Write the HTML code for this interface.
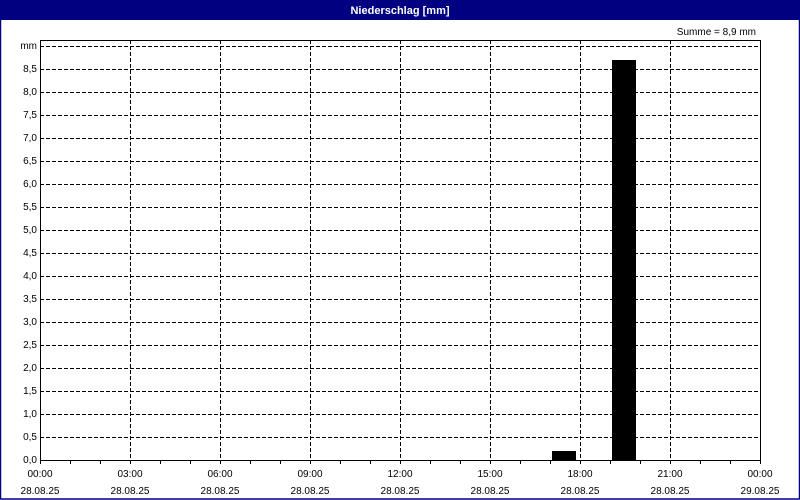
<!DOCTYPE html>
<html><head><meta charset="utf-8"><style>
html,body{margin:0;padding:0;background:#fff;}
svg{display:block;font-family:"Liberation Sans",sans-serif;font-size:10px;}
</style></head><body>
<svg width="800" height="500" xmlns="http://www.w3.org/2000/svg">
<rect x="0" y="0" width="800" height="500" fill="#fff"/>
<rect x="0" y="0" width="800" height="20" fill="#000080"/>
<rect x="0.5" y="0.5" width="799" height="498.5" fill="none" stroke="#000080" stroke-width="1.5"/>
<text x="400" y="14" fill="#fff" font-weight="bold" font-size="11" text-anchor="middle">Niederschlag [mm]</text>
<text x="756" y="35" fill="#000" text-anchor="end">Summe = 8,9 mm</text>
<g stroke="#000" stroke-width="1" stroke-dasharray="4,2" fill="none">
<path d="M40 46.5H760M40 69.5H760M40 92.5H760M40 115.5H760M40 138.5H760M40 161.5H760M40 184.5H760M40 207.5H760M40 230.5H760M40 253.5H760M40 276.5H760M40 299.5H760M40 322.5H760M40 345.5H760M40 368.5H760M40 391.5H760M40 414.5H760M40 437.5H760"/>
<path d="M130.5 40V460M220.5 40V460M310.5 40V460M400.5 40V460M490.5 40V460M580.5 40V460M670.5 40V460"/>
</g>
<path d="M40.5 40V460.5H760.5V40.5H40" stroke="#000" fill="none"/>
<path d="M40.5 460V464M70.5 460V464M100.5 460V464M130.5 460V464M160.5 460V464M190.5 460V464M220.5 460V464M250.5 460V464M280.5 460V464M310.5 460V464M340.5 460V464M370.5 460V464M400.5 460V464M430.5 460V464M460.5 460V464M490.5 460V464M520.5 460V464M550.5 460V464M580.5 460V464M610.5 460V464M640.5 460V464M670.5 460V464M700.5 460V464M730.5 460V464M760.5 460V464" stroke="#000"/>
<rect x="552" y="451" width="24" height="9" fill="#000"/>
<rect x="612" y="60" width="24" height="400" fill="#000"/>
<g text-anchor="end" fill="#000">
<text x="37" y="49">mm</text>
<text x="37" y="72">8,5</text><text x="37" y="95">8,0</text><text x="37" y="118">7,5</text><text x="37" y="141">7,0</text><text x="37" y="164">6,5</text><text x="37" y="187">6,0</text><text x="37" y="210">5,5</text><text x="37" y="233">5,0</text><text x="37" y="256">4,5</text><text x="37" y="279">4,0</text><text x="37" y="302">3,5</text><text x="37" y="325">3,0</text><text x="37" y="348">2,5</text><text x="37" y="371">2,0</text><text x="37" y="394">1,5</text><text x="37" y="417">1,0</text><text x="37" y="440">0,5</text><text x="37" y="463">0,0</text>
</g>
<g text-anchor="middle" fill="#000">
<text x="40" y="477">00:00</text><text x="40" y="494">28.08.25</text>
<text x="130" y="477">03:00</text><text x="130" y="494">28.08.25</text>
<text x="220" y="477">06:00</text><text x="220" y="494">28.08.25</text>
<text x="310" y="477">09:00</text><text x="310" y="494">28.08.25</text>
<text x="400" y="477">12:00</text><text x="400" y="494">28.08.25</text>
<text x="490" y="477">15:00</text><text x="490" y="494">28.08.25</text>
<text x="580" y="477">18:00</text><text x="580" y="494">28.08.25</text>
<text x="670" y="477">21:00</text><text x="670" y="494">28.08.25</text>
<text x="760" y="477">00:00</text><text x="760" y="494">29.08.25</text>
</g>
</svg>
</body></html>
